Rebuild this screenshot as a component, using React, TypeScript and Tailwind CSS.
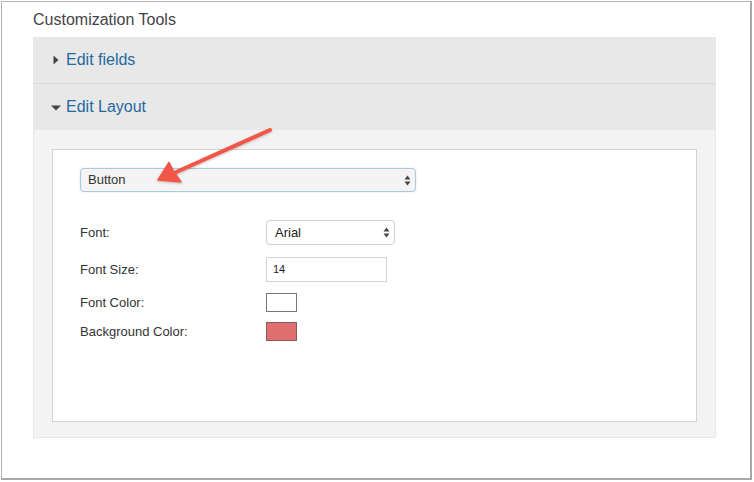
import React from "react";

function UpDown() {
  return (
    <svg width="7" height="11" viewBox="0 0 7 11" className="shrink-0">
      <path d="M3.5 0.5 L6.5 4.5 L0.5 4.5 Z" fill="#444" />
      <path d="M3.5 10.5 L6.5 6.5 L0.5 6.5 Z" fill="#444" />
    </svg>
  );
}

function Row({ label, children, className = "" }: { label: string; children: React.ReactNode; className?: string }) {
  return (
    <div className={`flex items-center ${className}`}>
      <div className="w-[186px] text-[13px] text-[#333]">{label}</div>
      {children}
    </div>
  );
}

export default function App() {
  return (
    <div className="w-[754px] h-[482px] bg-white p-[1px] font-['Liberation_Sans',Arial,sans-serif]">
      <div className="relative w-[751px] h-[479px] border border-[#b4b4b4] border-r-2 border-b-2 border-r-[#a8a8a8] border-b-[#a8a8a8] bg-white pl-[31px]">
        {/* Title */}
        <div className="h-[35px] flex items-center text-[16px] text-[#444]">Customization Tools</div>

        {/* Accordion */}
        <div className="w-[683px]">
          <div className="h-[47px] bg-[#e8e8e8] border-b border-[#d9d9d9] flex items-center pl-[20px]">
            <svg width="6" height="10" viewBox="0 0 6 10" className="mr-[7px]">
              <path d="M0.5 0.5 L5.5 5 L0.5 9.5 Z" fill="#444" />
            </svg>
            <span className="text-[16px] text-[#1f6aa0]">Edit fields</span>
          </div>
          <div className="h-[46px] bg-[#e8e8e8] flex items-center pl-[18px]">
            <svg width="10" height="6" viewBox="0 0 10 6" className="mr-[5px] mt-[2px]">
              <path d="M0 0.5 L10 0.5 L5 5.5 Z" fill="#444" />
            </svg>
            <span className="text-[16px] text-[#1f6aa0]">Edit Layout</span>
          </div>

          <div className="h-[308px] bg-[#f3f3f3] border border-t-0 border-[#e8e8e8] pt-[19px] pl-[18px] pr-[18px] pb-[15px]">
            <div className="h-[273px] bg-white border border-[#d2d2d2] pl-[27px] pt-[18px]">
              <div className="w-[336px] h-[24px] rounded-[4px] border border-[#a9cbe0] bg-[#f4f4f4] shadow-[0_0_2px_rgba(102,175,233,0.35)] flex items-center justify-between pl-[7px] pr-[4px]">
                <span className="text-[13px] text-[#333]">Button</span>
                <UpDown />
              </div>

              <Row label="Font:" className="mt-[28px]">
                <div className="w-[129px] h-[25px] rounded-[4px] border border-[#cfcfcf] bg-white flex items-center justify-between pl-[8px] pr-[4px]">
                  <span className="text-[13px] text-[#222]">Arial</span>
                  <UpDown />
                </div>
              </Row>

              <Row label="Font Size:" className="mt-[12px]">
                <div className="w-[121px] h-[25px] border border-[#d4d4d4] bg-white flex items-center pl-[6px]">
                  <span className="text-[11px] text-[#222]">14</span>
                </div>
              </Row>

              <Row label="Font Color:" className="mt-[11px]">
                <div className="w-[31px] h-[19px] border border-[#777] bg-white" />
              </Row>

              <Row label="Background Color:" className="mt-[9px]">
                <div className="w-[31px] h-[19px] border border-[#8a5a5a] bg-[#e06f6f]" />
              </Row>
            </div>
          </div>
        </div>

        {/* Annotation arrow */}
        <svg className="absolute left-[-1px] top-[-1px] pointer-events-none" width="754" height="482" viewBox="0 0 754 482">
          <defs>
            <filter id="sh" x="-20%" y="-20%" width="140%" height="140%">
              <feDropShadow dx="0" dy="1" stdDeviation="1" floodColor="#000" floodOpacity="0.25" />
            </filter>
          </defs>
          <g filter="url(#sh)">
            <line x1="269" y1="129" x2="172" y2="172.5" stroke="#f2574a" strokeWidth="4" strokeLinecap="round" />
            <path d="M157 179 L168 161.5 L173 171 L180 181 Z" fill="#f2574a" strokeLinejoin="round" stroke="#f2574a" strokeWidth="1.5" />
          </g>
        </svg>
      </div>
    </div>
  );
}
